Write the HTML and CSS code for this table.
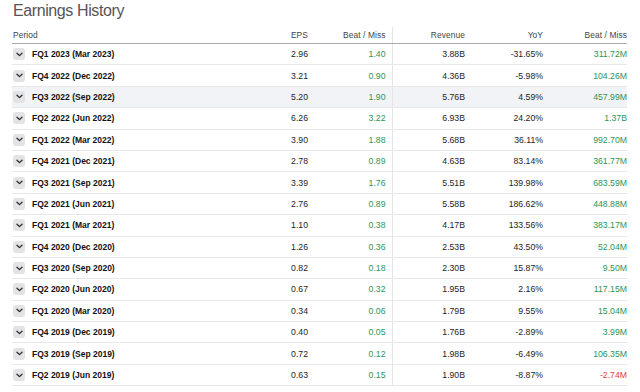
FILE: index.html
```html
<!DOCTYPE html>
<html lang="en">
<head>
  <meta charset="UTF-8" />
  <title>Earnings History</title>
  <link rel="stylesheet" href="styles.css">
</head>
<body>

  <div class="earnings">
    <h2 class="title">Earnings History</h2>

    <table class="history">
      <colgroup>
        <col class="col-period">
        <col class="col-eps">
        <col class="col-beat">
        <col class="col-rev">
        <col class="col-yoy">
        <col class="col-beat2">
      </colgroup>
      <thead>
        <tr>
          <th class="left">Period</th>
          <th>EPS</th>
          <th class="split">Beat / Miss</th>
          <th>Revenue</th>
          <th>YoY</th>
          <th class="last">Beat / Miss</th>
        </tr>
      </thead>
      <tbody id="rows"></tbody>
    </table>
  </div>

  <script>
    const rows = [
      ["FQ1 2023 (Mar 2023)", "2.96", "1.40", "3.88B", "-31.65%", "311.72M"],
      ["FQ4 2022 (Dec 2022)", "3.21", "0.90", "4.36B", "-5.98%", "104.26M"],
      ["FQ3 2022 (Sep 2022)", "5.20", "1.90", "5.76B", "4.59%", "457.99M"],
      ["FQ2 2022 (Jun 2022)", "6.26", "3.22", "6.93B", "24.20%", "1.37B"],
      ["FQ1 2022 (Mar 2022)", "3.90", "1.88", "5.68B", "36.11%", "992.70M"],
      ["FQ4 2021 (Dec 2021)", "2.78", "0.89", "4.63B", "83.14%", "361.77M"],
      ["FQ3 2021 (Sep 2021)", "3.39", "1.76", "5.51B", "139.98%", "683.59M"],
      ["FQ2 2021 (Jun 2021)", "2.76", "0.89", "5.58B", "186.62%", "448.88M"],
      ["FQ1 2021 (Mar 2021)", "1.10", "0.38", "4.17B", "133.56%", "383.17M"],
      ["FQ4 2020 (Dec 2020)", "1.26", "0.36", "2.53B", "43.50%", "52.04M"],
      ["FQ3 2020 (Sep 2020)", "0.82", "0.18", "2.30B", "15.87%", "9.50M"],
      ["FQ2 2020 (Jun 2020)", "0.67", "0.32", "1.95B", "2.16%", "117.15M"],
      ["FQ1 2020 (Mar 2020)", "0.34", "0.06", "1.79B", "9.55%", "15.04M"],
      ["FQ4 2019 (Dec 2019)", "0.40", "0.05", "1.76B", "-2.89%", "3.99M"],
      ["FQ3 2019 (Sep 2019)", "0.72", "0.12", "1.98B", "-6.49%", "106.35M"],
      ["FQ2 2019 (Jun 2019)", "0.63", "0.15", "1.90B", "-8.87%", "-2.74M"]
    ];

    const chevron = '<svg width="7" height="5" viewBox="0 0 7 5"><path d="M1 1.2 L3.5 3.6 L6 1.2" fill="none" stroke="#2b2b2b" stroke-width="1.3" stroke-linecap="round" stroke-linejoin="round"/></svg>';

    const tbody = document.getElementById("rows");
    rows.forEach((r, i) => {
      const tr = document.createElement("tr");
      if (i === 2) tr.className = "active";
      const cls = v => v.startsWith("-") ? "down" : "up";
      tr.innerHTML =
        '<td class="left"><span class="toggle">' + chevron + '</span><span class="period">' + r[0] + '</span></td>' +
        '<td>' + r[1] + '</td>' +
        '<td class="split ' + cls(r[2]) + '">' + r[2] + '</td>' +
        '<td>' + r[3] + '</td>' +
        '<td>' + r[4] + '</td>' +
        '<td class="last ' + cls(r[5]) + '">' + r[5] + '</td>';
      tbody.appendChild(tr);
    });
  </script>

</body>
</html>
```

FILE: styles.css
```css
body {
  margin: 0;
  background: #fff;
  font-family: 'Liberation Sans', Arial, sans-serif;
  color: #1d1d1f;
}

.earnings {
  padding: 0 13px 0 12px;
}

.title {
  margin: 0 0 5px 1px;
  font-size: 16px;
  line-height: 22px;
  font-weight: 400;
  letter-spacing: -0.4px;
  color: #555;
}

.history {
  width: 615px;
  border-collapse: collapse;
  table-layout: fixed;
}

.col-period { width: 228px; }
.col-eps { width: 74px; }
.col-beat { width: 78px; }
.col-rev { width: 79px; }
.col-yoy { width: 78px; }
.col-beat2 { width: 78px; }

.history th {
  height: 16px;
  padding: 0 6px 0 0;
  font-size: 8.4px;
  font-weight: 400;
  letter-spacing: 0.1px;
  color: #444;
  text-align: right;
  border-bottom: 1px solid #a9a9a9;
  vertical-align: middle;
}

.history td {
  height: 20.4px;
  padding: 0 6px 0 0;
  font-size: 8.7px;
  text-align: right;
  border-bottom: 1px solid #e8e8e8;
  vertical-align: middle;
  white-space: nowrap;
}

.history .left {
  text-align: left;
  padding-left: 1px;
}

.history .split {
  border-right: 1px solid #e6e6e6;
}

.history .last {
  padding-right: 0;
}

.history tr.active td {
  background: #f2f3f6;
}

.toggle {
  display: inline-flex;
  align-items: center;
  justify-content: center;
  width: 12px;
  height: 12px;
  border-radius: 3px;
  background: #e3e3e5;
  vertical-align: middle;
  margin-right: 7px;
}

.toggle svg {
  display: block;
}

.period {
  font-size: 8.5px;
  font-weight: 700;
  color: #111;
  vertical-align: middle;
}

.up { color: #2e9459; }
.down { color: #e1443a; }
```
